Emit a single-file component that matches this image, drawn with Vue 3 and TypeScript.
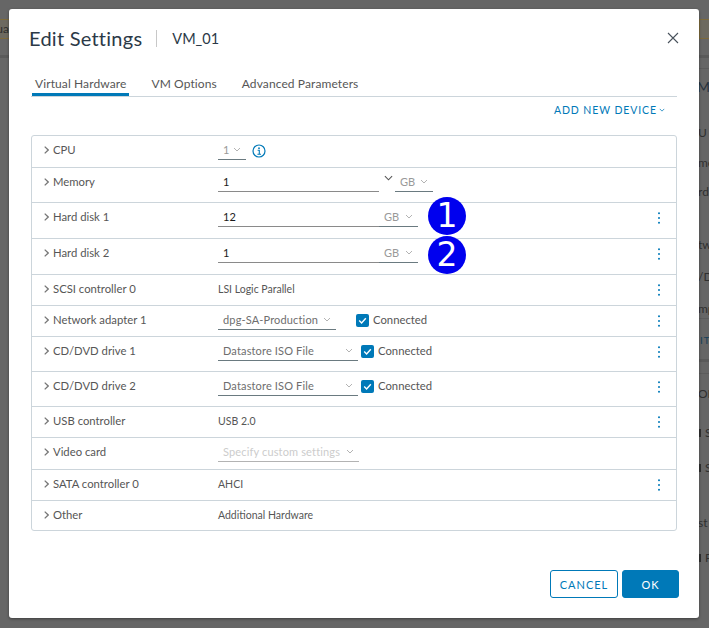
<script setup lang="ts">
// Edit Settings dialog, hardware list on top of the dimmed vSphere page
interface BackdropMark {
  text: string;
  top: number;
  kind?: "blue" | "bar" | "large";
}

interface HardwareRow {
  label: string;
  height: number; // including the bottom border
  menu: boolean;
  plain?: string;
  cpu?: boolean;
  memory?: boolean;
  disk?: string;
  callout?: number;
  select?: string;
  selectWidth?: number;
  disabled?: boolean;
  connected?: boolean;
}

const backdropMarks: BackdropMark[] = [
  { text: "M", top: 79, kind: "large" },
  { text: "U", top: 125 },
  { text: "me", top: 155 },
  { text: "rd", top: 184 },
  { text: "tw", top: 237 },
  { text: "/D", top: 269 },
  { text: "mp", top: 301 },
  { text: "IT", top: 332, kind: "blue" },
  { text: "OI", top: 386 },
  { text: "S", top: 425, kind: "bar" },
  { text: "S", top: 460, kind: "bar" },
  { text: "st", top: 515 },
  { text: "P", top: 550, kind: "bar" },
];

const rows: HardwareRow[] = [
  { label: "CPU", height: 32, menu: false, cpu: true },
  { label: "Memory", height: 35, menu: false, memory: true },
  { label: "Hard disk 1", height: 36, menu: true, disk: "12", callout: 1 },
  { label: "Hard disk 2", height: 36, menu: true, disk: "1", callout: 2 },
  { label: "SCSI controller 0", height: 31, menu: true, plain: "LSI Logic Parallel" },
  { label: "Network adapter 1", height: 31, menu: true, select: "dpg-SA-Production", selectWidth: 118, connected: true },
  { label: "CD/DVD drive 1", height: 35, menu: true, select: "Datastore ISO File", selectWidth: 140, connected: true },
  { label: "CD/DVD drive 2", height: 35, menu: true, select: "Datastore ISO File", selectWidth: 140, connected: true },
  { label: "USB controller", height: 31, menu: true, plain: "USB 2.0" },
  { label: "Video card", height: 32, menu: false, select: "Specify custom settings", selectWidth: 141, disabled: true },
  { label: "SATA controller 0", height: 31, menu: true, plain: "AHCI" },
  { label: "Other", height: 29, menu: false, plain: "Additional Hardware" },
];
</script>

<template>
  <div class="page">
    <!-- 背景のページ -->
    <div class="backdrop">
      <div class="backdrop-button left">tua</div>
      <div class="backdrop-button right"></div>
      <div class="backdrop-band band-top"></div>
      <div class="backdrop-band band-mid"></div>
      <div class="backdrop-line line-a"></div>
      <div class="backdrop-line line-b"></div>
      <div class="backdrop-line line-c"></div>
      <span
        v-for="mark in backdropMarks"
        :key="mark.top"
        class="backdrop-mark"
        :class="mark.kind"
        :style="{ top: mark.top + 'px' }"
      >{{ mark.text }}</span>
    </div>

    <div class="dialog">
      <header class="dialog-head">
        <h1 class="title">Edit Settings</h1>
        <span class="title-sep"></span>
        <span class="vm-name">VM_01</span>
        <svg class="close" width="12" height="12" viewBox="0 0 12 12">
          <path d="M1 1l10 10M11 1L1 11" stroke="#49525c" stroke-width="1.1" fill="none" />
        </svg>
      </header>

      <nav class="tabs">
        <span class="tab active">Virtual Hardware</span>
        <span class="tab">VM Options</span>
        <span class="tab">Advanced Parameters</span>
      </nav>

      <div class="add-row">
        <span class="add-link">ADD NEW DEVICE</span>
        <svg class="caret small" viewBox="0 0 8 5"><path d="M1 1l3 3 3-3" /></svg>
      </div>

      <div class="hw-list">
        <div
          v-for="row in rows"
          :key="row.label"
          class="hw-row"
          :style="{ height: row.height + 'px' }"
        >
          <div class="hw-label">
            <svg class="chev" viewBox="0 0 5 8"><path d="M0.7 0.6L4.2 4 0.7 7.4" /></svg>
            <span>{{ row.label }}</span>
          </div>

          <div v-if="row.plain" class="hw-plain">{{ row.plain }}</div>

          <div v-else class="hw-value">
            <template v-if="row.cpu">
              <div class="select cpu">
                <span class="muted">1</span>
                <svg class="caret" viewBox="0 0 8 5"><path d="M1 1l3 3 3-3" /></svg>
              </div>
              <svg class="info" width="14" height="14" viewBox="0 0 14 14">
                <circle cx="7" cy="7" r="6" fill="none" stroke="#0079b8" stroke-width="1.2" />
                <circle cx="7" cy="4.2" r="0.9" fill="#0079b8" />
                <path d="M5.6 6.2H7.3V10M5.4 10.2H9" fill="none" stroke="#0079b8" stroke-width="1.1" />
              </svg>
            </template>

            <template v-else-if="row.memory">
              <div class="input memory">1</div>
              <svg class="spin" viewBox="0 0 10 6"><path d="M1 1l4 4 4-4" /></svg>
              <div class="select unit-wide">
                <span class="muted">GB</span>
                <svg class="caret" viewBox="0 0 8 5"><path d="M1 1l3 3 3-3" /></svg>
              </div>
            </template>

            <template v-else-if="row.disk">
              <div class="input memory">{{ row.disk }}</div>
              <div class="select unit">
                <span class="muted">GB</span>
                <svg class="caret" viewBox="0 0 8 5"><path d="M1 1l3 3 3-3" /></svg>
              </div>
            </template>

            <template v-else>
              <div class="select" :class="{ disabled: row.disabled }" :style="{ width: row.selectWidth + 'px' }">
                <span class="text">{{ row.select }}</span>
                <svg class="caret" viewBox="0 0 8 5"><path d="M1 1l3 3 3-3" /></svg>
              </div>
              <template v-if="row.connected">
                <span class="check-box" :class="{ net: row.selectWidth === 118 }">
                  <svg viewBox="0 0 13 13"><path d="M3.2 6.6l2.4 2.3 4.2-4.6" /></svg>
                </span>
                <span class="check-label">Connected</span>
              </template>
            </template>
          </div>

          <svg v-if="row.menu" class="kebab" viewBox="0 0 4 12">
            <circle cx="2" cy="1.2" r="1" /><circle cx="2" cy="6" r="1" /><circle cx="2" cy="10.8" r="1" />
          </svg>

          <span v-if="row.callout" class="callout" :class="'callout-' + row.callout">{{ row.callout }}</span>
        </div>
      </div>

      <footer class="dialog-foot">
        <button class="btn outline">CANCEL</button>
        <button class="btn primary">OK</button>
      </footer>
    </div>
  </div>
</template>

<style>
html,
body {
  margin: 0;
  overflow: hidden;
}
</style>

<style scoped>
.page {
  position: relative;
  width: 709px;
  height: 628px;
  background: #666;
  padding: 9px;
  box-sizing: border-box;
  font-family: "Lato", "Noto Sans", sans-serif;
  color: #565656;
  overflow: hidden;
}

.backdrop {
  position: absolute;
  inset: 0;
}

.backdrop-button {
  position: absolute;
  top: 19px;
  height: 20px;
  box-sizing: border-box;
  border: 1px solid #7d6a3c;
  background: #6d6a60;
  font-size: 12px;
  line-height: 18px;
  color: #2e2e2e;
}

.backdrop-button.left {
  left: -14px;
  width: 24px;
  text-align: right;
}

.backdrop-button.right {
  left: 699px;
  width: 20px;
}

.backdrop-band {
  position: absolute;
  height: 3px;
  background: #5a5a5a;
}

.band-top {
  left: 0;
  right: 0;
  top: 55px;
}

.band-mid {
  left: 699px;
  right: 0;
  top: 359px;
}

.backdrop-line {
  position: absolute;
  left: 699px;
  right: 0;
  height: 1px;
  background: #5c5c5c;
}

.line-a {
  top: 68px;
}

.line-b {
  top: 318px;
}

.line-c {
  top: 373px;
}

.backdrop-mark {
  position: absolute;
  left: 698px;
  font-size: 12px;
  line-height: 16px;
  color: #2f2f2f;
  white-space: nowrap;
}

.backdrop-mark.large {
  left: 697px;
  font-size: 14px;
  color: #27333f;
}

.backdrop-mark.blue {
  left: 700px;
  color: #16405a;
  font-size: 10px;
  letter-spacing: 1px;
}

.backdrop-mark.bar {
  left: 705px;
}

.backdrop-mark.bar::before {
  content: "";
  position: absolute;
  left: -6px;
  top: 4px;
  width: 2px;
  height: 8px;
  background: #2f2f2f;
}

.dialog {
  position: relative;
  width: 690px;
  height: 609px;
  background: #fff;
  border-radius: 3px;
  box-sizing: border-box;
  padding: 0 20px 0 22px;
  display: flex;
  flex-direction: column;
  box-shadow: 0 1px 3px rgba(0, 0, 0, 0.4);
}

.dialog-head {
  display: flex;
  align-items: center;
  height: 58px;
  flex: none;
}

.title {
  margin: 0 0 0 -2px;
  font-size: 20px;
  font-weight: 400;
  color: #2b3947;
  letter-spacing: 0.25px;
}

.title-sep {
  width: 1px;
  height: 17px;
  background: #c8c8c8;
  margin: 0 15px 0 14px;
}

.vm-name {
  font-size: 14.5px;
  color: #2b3947;
}

.close {
  margin-left: auto;
  margin-right: 0;
}

.tabs {
  display: flex;
  gap: 19px;
  height: 30px;
  flex: none;
  margin-right: 2px;
  padding-left: 1px;
  border-bottom: 1px solid #ccd5db;
  box-sizing: border-box;
}

.tab {
  font-size: 12px;
  color: #565656;
  line-height: 16px;
  padding: 9px 3px 0;
  letter-spacing: 0.1px;
  box-sizing: border-box;
  height: 29px;
}

.tab.active {
  border-bottom: 3px solid #0079b8;
}

.add-row {
  display: flex;
  align-items: center;
  justify-content: flex-end;
  height: 26px;
  flex: none;
  margin-right: 14px;
  margin-bottom: 12px;
}

.add-link {
  font-size: 10.5px;
  letter-spacing: 0.9px;
  color: #0079b8;
}

.caret {
  width: 8px;
  height: 5px;
  flex: none;
  stroke: #b3b3b3;
  stroke-width: 1;
  fill: none;
}

.caret.small {
  width: 6px;
  height: 4px;
  margin-left: 2px;
  stroke: #0079b8;
}

.hw-list {
  border: 1px solid #ccd5db;
  border-radius: 3px;
  width: 646px;
  flex: none;
  box-sizing: border-box;
}

.hw-row {
  position: relative;
  display: flex;
  align-items: flex-start;
  box-sizing: border-box;
  border-bottom: 1px solid #ccd5db;
  padding-left: 12px;
  padding-right: 15px;
}

.hw-row:last-child {
  border-bottom: none;
}

.hw-label {
  display: flex;
  align-items: center;
  width: 174px;
  flex: none;
  padding-top: 6px;
  font-size: 11.3px;
  line-height: 16px;
  color: #565656;
  white-space: nowrap;
}

.chev {
  width: 5px;
  height: 8px;
  margin-right: 4px;
  flex: none;
  fill: none;
  stroke: #777;
  stroke-width: 1.3;
}

.hw-plain {
  padding-top: 6px;
  font-size: 10.5px;
  line-height: 16px;
  color: #565656;
}

.hw-value {
  display: flex;
  align-items: flex-start;
  margin-top: 4px;
  min-width: 0;
}

.input {
  height: 20px;
  line-height: 19px;
  padding-left: 5px;
  box-sizing: border-box;
  border-bottom: 1px solid #8a8a8a;
  font-size: 11px;
  color: #1a1a1a;
}

.input.memory {
  width: 161px;
}

.select {
  display: flex;
  align-items: center;
  justify-content: space-between;
  height: 20px;
  padding: 0 5px;
  box-sizing: border-box;
  border-bottom: 1px solid #6a7a80;
  font-size: 11px;
  color: #6e6e6e;
  white-space: nowrap;
}

.select.cpu {
  width: 28px;
}

.select.unit {
  width: 39px;
}

.select.unit-wide {
  width: 38px;
}

.text {
  letter-spacing: 0.15px;
}

.muted {
  color: #999;
}

.select.disabled {
  color: #ccc;
  border-bottom-color: #b3b3b3;
}

.spin {
  width: 9px;
  height: 6px;
  margin: 3px 2px 0 5px;
  flex: none;
  fill: none;
  stroke: #555;
  stroke-width: 1.2;
}

.info {
  margin: 4px 0 0 6px;
}

.check-box {
  width: 13px;
  height: 13px;
  background: #0079b8;
  border-radius: 2px;
  display: flex;
  margin: 4px 0 0 3px;
}

.check-box.net {
  margin-left: 20px;
}

.check-box svg {
  width: 13px;
  height: 13px;
  fill: none;
  stroke: #fff;
  stroke-width: 1.4;
}

.check-label {
  font-size: 11.3px;
  line-height: 16px;
  margin: 2px 0 0 4px;
  color: #565656;
}

.kebab {
  width: 4px;
  height: 12px;
  margin: 9px 0 0 auto;
  flex: none;
  fill: #0079b8;
}

.callout {
  position: absolute;
  left: 396px;
  width: 38px;
  height: 38px;
  border-radius: 50%;
  background: #0000ee;
  color: #fff;
  font-family: "DejaVu Sans", sans-serif;
  font-size: 33px;
  line-height: 38px;
  text-align: center;
  z-index: 1;
}

.callout-1 {
  top: -6px;
}

.callout-2 {
  top: -3px;
}

.dialog-foot {
  display: flex;
  justify-content: flex-end;
  gap: 4px;
  margin-top: 39px;
}

.btn {
  height: 28px;
  border-radius: 3px;
  font-family: inherit;
  font-size: 11px;
  letter-spacing: 1px;
  padding: 0;
  box-sizing: border-box;
}

.btn.outline {
  width: 68px;
  background: #fff;
  border: 1px solid #0079b8;
  color: #0079b8;
}

.btn.primary {
  width: 57px;
  background: #0079b8;
  border: 1px solid #0079b8;
  color: #fff;
}
</style>
